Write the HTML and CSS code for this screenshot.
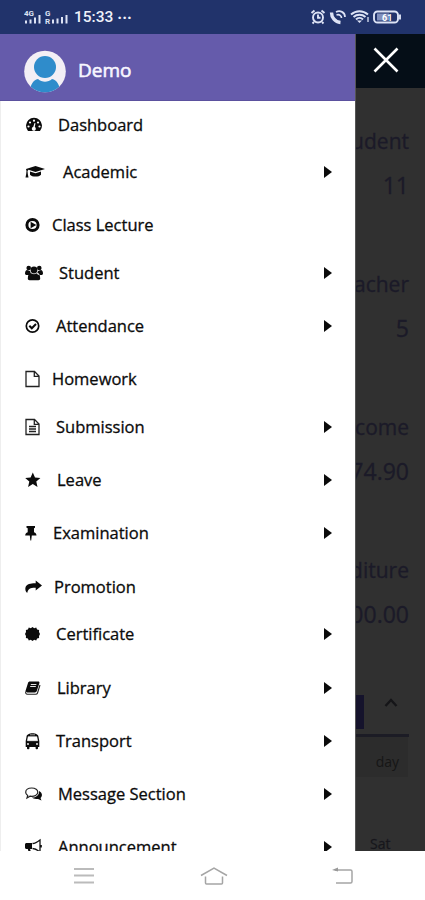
FILE: index.html
```html
<!DOCTYPE html>
<html lang="en">
<head>
  <meta charset="utf-8" />
  <meta name="viewport" content="width=device-width, initial-scale=1">
  <title>Demo</title>
  <link rel="stylesheet" href="styles.css">
</head>
<body>
<div class="phone">

  <!-- status bar -->
  <header class="status">
    <svg class="signal" width="46" height="18" viewBox="0 0 46 18">
      <g stroke="#dde3f5" stroke-width="2">
        <path d="M2 14.500v-3M6.500 14.500v-4M11 14.500v-6M15.500 14.500V6"/>
        <path d="M29 14.500v-4M33.500 14.500v-5M38 14.500V8M42.500 14.500V6"/>
      </g>
      <text x="0" y="6.500">4G</text>
      <text x="21" y="7">G</text>
      <text x="21" y="14.500">R</text>
    </svg>
    <span class="time">15:33</span>
    <span class="dots">···</span>
    <svg class="state" width="94" height="18" viewBox="0 0 94 18" fill="none" stroke="#dde3f5" stroke-width="1.900">
      <circle cx="8" cy="9.500" r="5"/>
      <path d="M8 6.500v3.300h2.500M1.500 5l3-2.500M14.500 5l-3-2.500M4 14l-1.500 1.500M12 14l1.500 1.500"/>
      <path d="M21.500 4.500c0 5 3.500 9.500 9 10" stroke-width="3.400"/>
      <path d="M26 4c4-2 9 0 9 5M26.500 7c3-1 5 1 5 3" stroke-width="1.700"/>
      <path d="M41 6.500c5-4.500 12-4.500 17 0M43.500 9c3.500-3 8.500-3 12 0M46 11.500c2-2 5-2 7 0" stroke-width="2"/>
      <path d="M47 12.500h5l-2.500 2.500z" fill="#dde3f5" stroke="none"/>
      <path d="M58 9v5" stroke-width="1.300"/>
      <rect x="64" y="3.500" width="24" height="11" rx="3.500"/>
      <rect x="67" y="5.500" width="12" height="7" fill="#8290bd" stroke="none"/>
      <path d="M90 6.500v5"/>
      <text x="72" y="12.500" class="charge">61</text>
    </svg>
  </header>

  <main class="screen">
    <!-- drawer -->
    <nav class="drawer">
      <div class="user">
        <svg class="avatar" width="42" height="43" viewBox="0 0 42 43">
          <defs><clipPath id="face"><circle cx="21" cy="21.500" r="20.800"/></clipPath></defs>
          <circle cx="21" cy="21.500" r="20.800" fill="#f3eff5"/>
          <g clip-path="url(#face)" fill="#2f8ccb">
            <circle cx="21" cy="17" r="11"/>
            <path d="M6 43c0-8 3-13 8-14 4 3.500 10 3.500 14 0 5 1 8 6 8 14z"/>
          </g>
        </svg>
        <span class="name">Demo</span>
      </div>
      <ul class="menu">
        <li class="dashboard"><svg viewBox="0 0 20 18"><path d="M3 15A8 8 0 1 1 15 15z"/><g fill="#fff"><circle cx="3.500" cy="10.500" r="1.100"/><circle cx="5" cy="6.500" r="1.100"/><circle cx="9" cy="4.700" r="1.100"/><circle cx="13" cy="6.500" r="1.100"/><circle cx="14.500" cy="10.500" r="1.100"/><path d="M9.500 7l1 .3-.7 3.700a2 2 0 1 1-1.500-.2z"/></g></svg>Dashboard</li>
        <li class="academic sub"><svg viewBox="0 0 20 18"><path d="M10.500 3L20 6l-9.500 3L3.500 6.800l-1 1.200.3 3 .7 3.500h-3L1.200 11l.3-3L1 6z"/><path d="M5 8.500l5.500 1.800L16 8.500v3.200c-2 2.500-9 2.500-11 0z"/></svg>Academic</li>
        <li class="lecture"><svg viewBox="0 0 20 18"><circle cx="7.500" cy="9" r="5.600" fill="none" stroke="#0b0b0b" stroke-width="3"/><path d="M5.600 5.700v6.600L11.300 9z"/></svg>Class Lecture</li>
        <li class="student sub"><svg viewBox="0 0 20 18"><circle cx="3.700" cy="4" r="2.300"/><circle cx="14.300" cy="4" r="2.300"/><circle cx="9" cy="6" r="3.400"/><path d="M0 10c0-3 1-4 2-4l3 1 1 3-2 1H1zM18 10c0-3-1-4-2-4l-3 1-1 3 2 1h3zM2.800 14.500C2.800 11 4 9 5.500 9c2 1.500 5 1.500 7 0 1.500 0 2.700 2 2.700 5.500 0 1-.7 1.700-1.700 1.700h-9c-1 0-1.700-.7-1.700-1.700z"/></svg>Student</li>
        <li class="attendance sub"><svg viewBox="0 0 20 18"><g fill="none" stroke="#0b0b0b"><circle cx="7.500" cy="9" r="6.200" stroke-width="1.700"/><path d="M4.300 8.700l2.500 2.600L11 7" stroke-width="2"/></g></svg>Attendance</li>
        <li class="homework"><svg viewBox="0 0 20 18"><path d="M1 1.500h8.500l4.500 4.500v10.500H1zM9.300 1.500V6.300H14" fill="none" stroke="#222" stroke-width="1.300"/></svg>Homework</li>
        <li class="submission sub"><svg viewBox="0 0 20 18"><path d="M1 1.500h8.500l4.500 4.500v10.500H1zM9.300 1.500V6.300H14M4 8.500h7M4 11h7M4 13.500h7" fill="none" stroke="#222" stroke-width="1.300"/></svg>Submission</li>
        <li class="leave sub"><svg viewBox="0 0 20 18"><path d="M7.800 1.500l2.200 5 5.400.5-4.100 3.600 1.200 5.400-4.700-2.900L3.100 16l1.200-5.400L.2 7l5.400-.5z"/></svg>Leave</li>
        <li class="examination sub"><svg viewBox="0 0 20 18"><path d="M1.500 2h8.500v1.800L9 4.200v4c1.700.7 2.500 1.800 2.500 3.400H6.800L6.200 16.500h-.8l-.6-4.900H.2c0-1.600.8-2.700 2.500-3.400v-4L1.500 3.800z"/></svg>Examination</li>
        <li class="promotion"><svg viewBox="0 0 20 18"><path d="M10.700 2.500l6.300 5-6.300 5V9.700C6 9.500 3 10.500 2.200 15 .3 13.500 0 11 .6 9 1.800 6 6 5.200 10.700 5.300z"/></svg>Promotion</li>
        <li class="certificate sub"><svg viewBox="0 0 20 18"><path d="M7.500 2l1.700 1.200 2-.6.9 1.900 2 .5-.1 2.100L15 9 14 10.900l.1 2.100-2 .5-.9 1.900-2-.6L7.500 16l-1.700-1.200-2 .6-.9-1.900-2-.5.1-2.100L0 9l1-1.900L.9 5l2-.5.9-1.900 2 .6z"/></svg>Certificate</li>
        <li class="library sub"><svg viewBox="0 0 20 18"><path d="M4.800 2.500h8.400c1 0 1.500.7 1.200 1.600l-2.600 8c-.3.900-1 1.400-2 1.400H2.200L.4 12.200 3 4c.3-1 1-1.500 1.800-1.500z"/><path d="M5.800 5.500h5.600M5.200 7.500h5.600" stroke="#fff" stroke-width=".9"/><path d="M.8 12.500c-.5 1.800.3 2.800 1.600 2.800h8.300c1 0 1.500-.4 1.800-1.300L15 6" fill="none" stroke="#222" stroke-width="1.100"/></svg>Library</li>
        <li class="transport sub"><svg viewBox="0 0 20 18"><path d="M1.500 5c0-5 12-5 12 0l.8 4v6H13v1.500c0 1-2.400 1-2.400 0V15H4.400v1.500c0 1-2.400 1-2.400 0V15H.7V9z"/><path d="M3.200 4.700h8.600l.8 4H2.400zM5 2.800h5" fill="#fff" stroke="#fff" stroke-width=".6"/><g fill="#fff"><circle cx="3" cy="12" r=".9"/><circle cx="12" cy="12" r=".9"/></g></svg>Transport</li>
        <li class="message sub"><svg viewBox="0 0 20 18"><path d="M6.700 3C3 3 .7 5 .7 7.200c0 1.500.8 2.500 2 3.300L2 13l3-1.800c4.500.7 7.800-1.300 7.800-4C12.800 5 10.500 3 6.700 3z" fill="none" stroke="#222" stroke-width="1.200"/><path d="M14 6c3.500 1.700 3.800 5 1.500 7l1 2.500-3.500-1.600c-2.500.5-5-.1-6.200-1.300 4.500 0 7.700-2.600 7.200-6.600z"/></svg>Message Section</li>
        <li class="announcement sub"><svg viewBox="0 0 20 18"><path d="M0 6.500C0 5.600.7 5 1.500 5H7v6H5l1.500 4.500H4L2.800 11H1.500C.7 11 0 10.400 0 9.500z"/><path d="M7.500 5.500c2.500 0 5-1.500 7.500-3.500v12c-2.500-2-5-3.500-7.500-3.500M16.200 7v2.500" fill="none" stroke="#111" stroke-width="1.300"/></svg>Announcement</li>
      </ul>
    </nav>

    <!-- dimmed page under the drawer -->
    <section class="page">
      <div class="topbar">
        <svg width="26" height="26" viewBox="0 0 26 26"><path d="M1.500 1.500l23 23M24.500 1.500l-23 23" stroke="#fff" stroke-width="2.600"/></svg>
      </div>
      <div class="card"><p>Student</p><b>11</b></div>
      <div class="card"><p>Teacher</p><b>5</b></div>
      <div class="card"><p>Income</p><b>74.90</b></div>
      <div class="card"><p>Expenditure</p><b>000.00</b></div>
      <div class="tools">
        <span class="tab"></span>
        <svg width="14" height="10" viewBox="0 0 14 10"><path d="M1.500 8L7 2l5.500 6" fill="none" stroke="#151518" stroke-width="2.300"/></svg>
      </div>
      <div class="day">day</div>
      <div class="sat">Sat</div>
    </section>
  </main>

  <footer class="keys">
    <svg width="22" height="18" viewBox="0 0 22 18"><path d="M1 2h20M1 8.500h20M1 15.500h20" stroke="#bbb" stroke-width="2"/></svg>
    <svg width="28" height="20" viewBox="0 0 28 20"><path d="M1 9.500L14 2l13 7.500M5.500 10.500v6.500q0 1 1 1h15q1 0 1-1v-6.500" fill="none" stroke="#a5a5a5" stroke-width="1.500"/></svg>
    <svg width="22" height="18" viewBox="0 0 22 18"><path d="M3 3h15.500q1.500 0 1.500 1.500v10q0 1.500-1.500 1.500H4" fill="none" stroke="#a5a5a5" stroke-width="1.500"/><path d="M0 3l6-2.500v4z" fill="#999"/></svg>
  </footer>
</div>
</body>
</html>
```
FILE: styles.css
```css
* {
  box-sizing: border-box;
}
body {
  margin: 0;
  background: #fff;
  font-family: 'Open Sans', sans-serif;
  color: #0b0b0b;
}
p, ul {
  margin: 0;
  padding: 0;
}
.phone {
  display: grid;
  grid-template-rows: 34px 817px 49px;
  width: 425px;
  height: 900px;
  overflow: hidden;
}

/* status bar */
.status {
  display: flex;
  align-items: center;
  padding: 0 21px 0 24px;
  background: #21336b;
  color: #eef1fa;
  font-family: Roboto, sans-serif;
}
.signal {
  margin-top: 2px;
}
.signal text {
  font-size: 8px;
  font-weight: bold;
  fill: #dde3f5;
}
.time {
  margin-left: 4px;
  font-size: 15.5px;
  font-weight: 500;
}
.dots {
  margin-left: 4px;
  font-size: 16px;
  font-weight: bold;
}
.state {
  margin-left: auto;
}
.charge {
  font-size: 9px;
  font-weight: bold;
  fill: #fff;
  stroke: none;
}

/* drawer */
.screen {
  display: grid;
  grid-template-columns: 355px 70px;
  overflow: hidden;
}
.drawer {
  overflow: hidden;
}
.user {
  display: flex;
  align-items: center;
  height: 67px;
  padding: 9px 0 0 24px;
  background: #655bab;
  border-bottom: 1px solid #5b519e;
}
.name {
  margin: -3px 0 0 12px;
  color: #f8f6ff;
  font-size: 19px;
  -webkit-text-stroke: .6px #f8f6ff;
}
.menu {
  list-style: none;
  border-left: 1px solid #eee;
}
.menu li {
  display: flex;
  align-items: center;
  height: 47.5px;
  padding: 0 0 1.5px 24px;
  font-size: 16.5px;
  -webkit-text-stroke: .3px #0b0b0b;
}
.menu li.sub {
  height: 53.3px;
  padding-bottom: 7.3px;
}
.menu svg {
  flex: none;
  width: 20px;
  height: 18px;
  margin: 1px 11px 0 0;
  fill: #0b0b0b;
  overflow: visible;
}
.sub::after {
  content: '';
  margin: 1px 23px 0 auto;
  border: 6px solid transparent;
  border-left: 8px solid #0b0b0b;
  border-right: 0;
}
.menu .dashboard svg,
.menu .message svg,
.menu .announcement svg { margin-right: 13px; }
.menu .student svg { margin-right: 14px; }
.menu .academic svg { margin-right: 18px; }
.menu .lecture svg,
.menu .homework svg { margin-right: 7px; }
.menu .examination svg { margin-right: 8px; }
.menu .promotion svg { margin-right: 9px; }
.menu .leave svg,
.menu .library svg { margin-right: 12px; }

/* page behind */
.page {
  overflow: hidden;
  background: #303030;
  border-left: 1px solid #555;
  color: #1b1a28;
  -webkit-text-stroke: .3px #1b1a28;
}
.topbar {
  height: 54px;
  margin-bottom: 36px;
  padding: 13px 0 0 17px;
  background: #050e17;
}
.card {
  display: flex;
  flex-direction: column;
  align-items: flex-end;
  height: 143px;
  padding-right: 16px;
  font-size: 21px;
  line-height: 34px;
}
.card b {
  margin-top: 10px;
  font-size: 23px;
  font-weight: 400;
}
.tools {
  display: flex;
  justify-content: space-between;
  align-items: center;
  height: 48px;
  margin: -7px 16px 0 0;
  padding-right: 11px;
  border-bottom: 3px solid #1c1c25;
}
.tab {
  width: 8px;
  height: 34px;
  background: #15132c;
}
.tools svg {
  margin-top: -18px;
}
.day {
  height: 40px;
  margin-right: 17px;
  padding: 14px 9px 0 0;
  background: #2c2c2c;
  color: #161616;
  font-size: 14px;
  line-height: 22px;
  text-align: right;
  -webkit-text-stroke: 0;
}
.sat {
  padding: 56px 0 0 14px;
  color: #151515;
  font-size: 14px;
  line-height: 22px;
}

/* navigation keys */
.keys {
  display: flex;
  justify-content: space-between;
  align-items: center;
  padding: 0 71px 0 73px;
}
```
